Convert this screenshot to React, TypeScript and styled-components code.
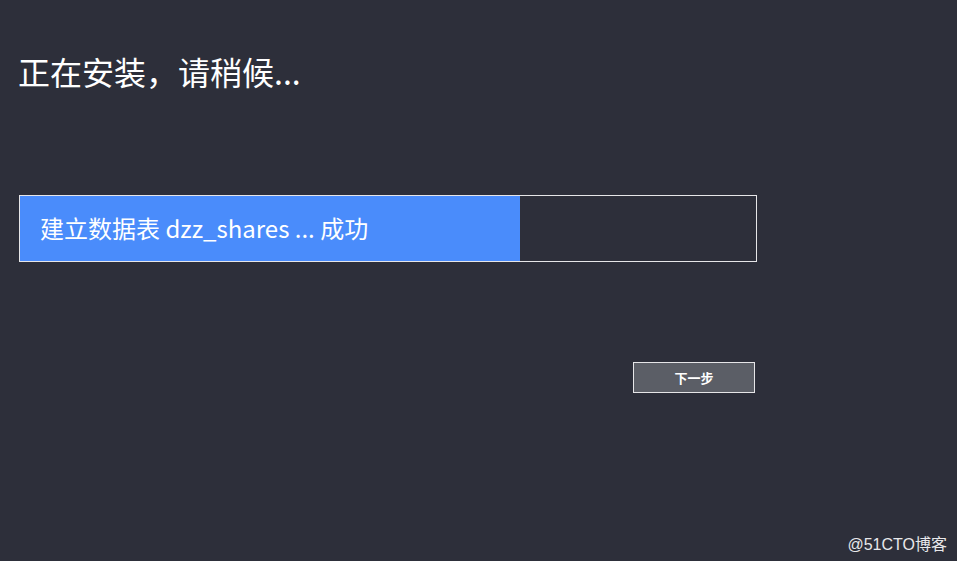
import React from "react"
import styled, { createGlobalStyle } from "styled-components"

const GlobalStyle = createGlobalStyle`
    html, body {
        margin: 0;
        padding: 0;
        background: #2d2f3a;
        font-family: "Noto Sans CJK SC", "Noto Sans", sans-serif;
    }
`
const Page = styled.main`
    position: relative;
    width: 957px;
    height: 561px;
    overflow: hidden;
    background: #2d2f3a;
    padding: 0 0 0 19px;
    box-sizing: border-box;
`
const Column = styled.section`
    width: 738px;
    display: flex;
    flex-direction: column;
`
const Title = styled.h1`
    margin: 49px 0 0 -1px;
    font-size: 32px;
    font-weight: 400;
    line-height: 44px;
    color: #ffffff;
`
const ProgressBox = styled.div`
    margin-top: 102px;
    height: 67px;
    border: 1px solid #e6e6e8;
    box-sizing: border-box;
    position: relative;
    display: flex;
`
const ProgressFill = styled.div`
    height: 100%;
    background: #4a8cfb;
`
const ProgressText = styled.span`
    position: absolute;
    left: 20px;
    top: 0;
    bottom: 0;
    display: flex;
    align-items: center;
    font-size: 24px;
    color: #ffffff;
    white-space: nowrap;
    padding-bottom: 2px;
`
const Actions = styled.div`
    margin-top: 100px;
    display: flex;
    justify-content: flex-end;
    padding-right: 2px;
`
const NextButton = styled.button`
    width: 122px;
    height: 31px;
    border: 1px solid #e6e6e8;
    background: #5b5e66;
    color: #ffffff;
    font-family: "Noto Sans CJK SC", sans-serif;
    font-size: 13px;
    font-weight: 700;
    padding: 0;
    cursor: pointer;
`
const Watermark = styled.span`
    position: absolute;
    right: 10px;
    bottom: 6px;
    font-family: "Liberation Sans", "Noto Sans CJK SC", sans-serif;
    font-size: 16px;
    color: #e8e8ea;
`

export default function App() {
    const percent = 500 / 736 * 100
    return (
        <>
            <GlobalStyle />
            <Page>
                <Column>
                    <Title>正在安装，请稍候...</Title>
                    <ProgressBox>
                        <ProgressFill style={{ width: `${percent}%` }} />
                        <ProgressText>建立数据表 dzz_shares ... 成功</ProgressText>
                    </ProgressBox>
                    <Actions>
                        <NextButton>下一步</NextButton>
                    </Actions>
                </Column>
                <Watermark>@51CTO博客</Watermark>
            </Page>
        </>
    )
}
